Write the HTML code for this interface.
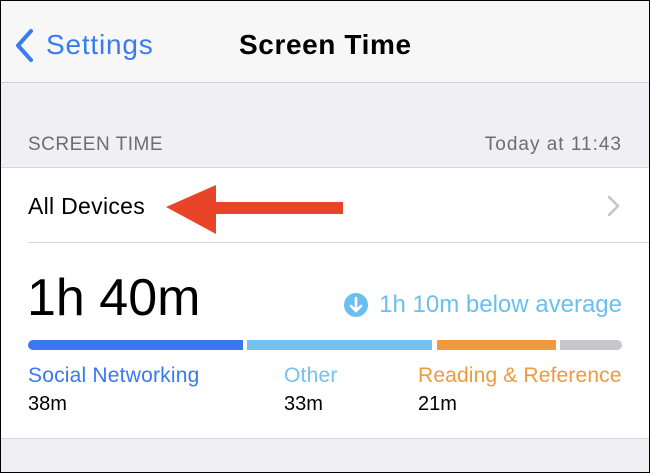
<!DOCTYPE html><html><head><style>
body{margin:0;width:650px;height:473px;overflow:hidden;font-family:"Liberation Sans",sans-serif;background:#efeff4;position:relative}
.b{position:absolute;inset:0;border:1px solid #000;box-sizing:border-box;pointer-events:none;z-index:9}
.t{position:absolute;white-space:nowrap;line-height:1}
</style></head><body>
<div class="b"></div>
<div style="position:absolute;left:0;top:0;width:650px;height:82px;background:#f7f7f8;border-bottom:1px solid #d0d0d4"></div>
<svg style="position:absolute;left:12px;top:28px" width="26" height="36"><path d="M19 3 L6 17.5 L19 32" stroke="#3a7cf0" stroke-width="4" fill="none" stroke-linecap="round" stroke-linejoin="round"/></svg>
<div class="t" style="left:46px;top:31px;font-size:28px;color:#3a7cf0;letter-spacing:0.8px">Settings</div>
<div class="t" style="left:239px;top:31px;font-size:28px;font-weight:bold;color:#000;letter-spacing:0.6px">Screen Time</div>
<div class="t" style="left:28px;top:135px;font-size:19px;color:#6d6d72;letter-spacing:0.5px">SCREEN TIME</div>
<div class="t" style="right:28px;top:135px;font-size:19px;color:#6d6d72;letter-spacing:1px">Today at 11:43</div>
<div style="position:absolute;left:0;top:167px;width:650px;height:270px;background:#fff;border-top:1px solid #d8d8dc;border-bottom:1px solid #d8d8dc"></div>
<div class="t" style="left:28px;top:195px;font-size:23px;color:#000;letter-spacing:0.3px">All Devices</div>
<svg style="position:absolute;left:606px;top:194px" width="16" height="24"><path d="M3 3 L12 12 L3 21" stroke="#c4c4c8" stroke-width="2.5" fill="none" stroke-linecap="round"/></svg>
<svg style="position:absolute;left:160px;top:180px" width="190" height="58"><polygon points="6,27 56,5 56,22 183,22 183,34 56,34 56,54" fill="#e8442a"/></svg>
<div style="position:absolute;left:28px;top:242px;width:622px;height:1px;background:#d8d8dc"></div>
<div class="t" style="left:27px;top:272px;font-size:52px;color:#000">1h 40m</div>
<svg style="position:absolute;left:343px;top:292px" width="26" height="26"><circle cx="13" cy="13" r="12" fill="#6bbff0"/><path d="M13 6 V19 M8 14 L13 19 L18 14" stroke="#fff" stroke-width="2.6" fill="none" stroke-linecap="round" stroke-linejoin="round"/></svg>
<div class="t" style="right:28px;top:293px;font-size:24px;color:#6bbff0">1h 10m below average</div>
<div style="position:absolute;left:28px;top:340px;width:215px;height:10px;background:#3a78f2;border-radius:5px 0 0 5px"></div>
<div style="position:absolute;left:247px;top:340px;width:185px;height:10px;background:#74c1f2"></div>
<div style="position:absolute;left:437px;top:340px;width:119px;height:10px;background:#f19a3b"></div>
<div style="position:absolute;left:560px;top:340px;width:62px;height:10px;background:#c6c6cb;border-radius:0 5px 5px 0"></div>
<div class="t" style="left:28px;top:365px;font-size:21px;color:#3a78f2;letter-spacing:0.2px">Social Networking</div>
<div class="t" style="left:284px;top:365px;font-size:21px;color:#74c1f2;letter-spacing:0.2px">Other</div>
<div class="t" style="left:418px;top:365px;font-size:21px;color:#f19a3b;letter-spacing:0.15px">Reading &amp; Reference</div>
<div class="t" style="left:28px;top:394px;font-size:20px;color:#000">38m</div>
<div class="t" style="left:284px;top:394px;font-size:20px;color:#000">33m</div>
<div class="t" style="left:418px;top:394px;font-size:20px;color:#000">21m</div>
</body></html>
